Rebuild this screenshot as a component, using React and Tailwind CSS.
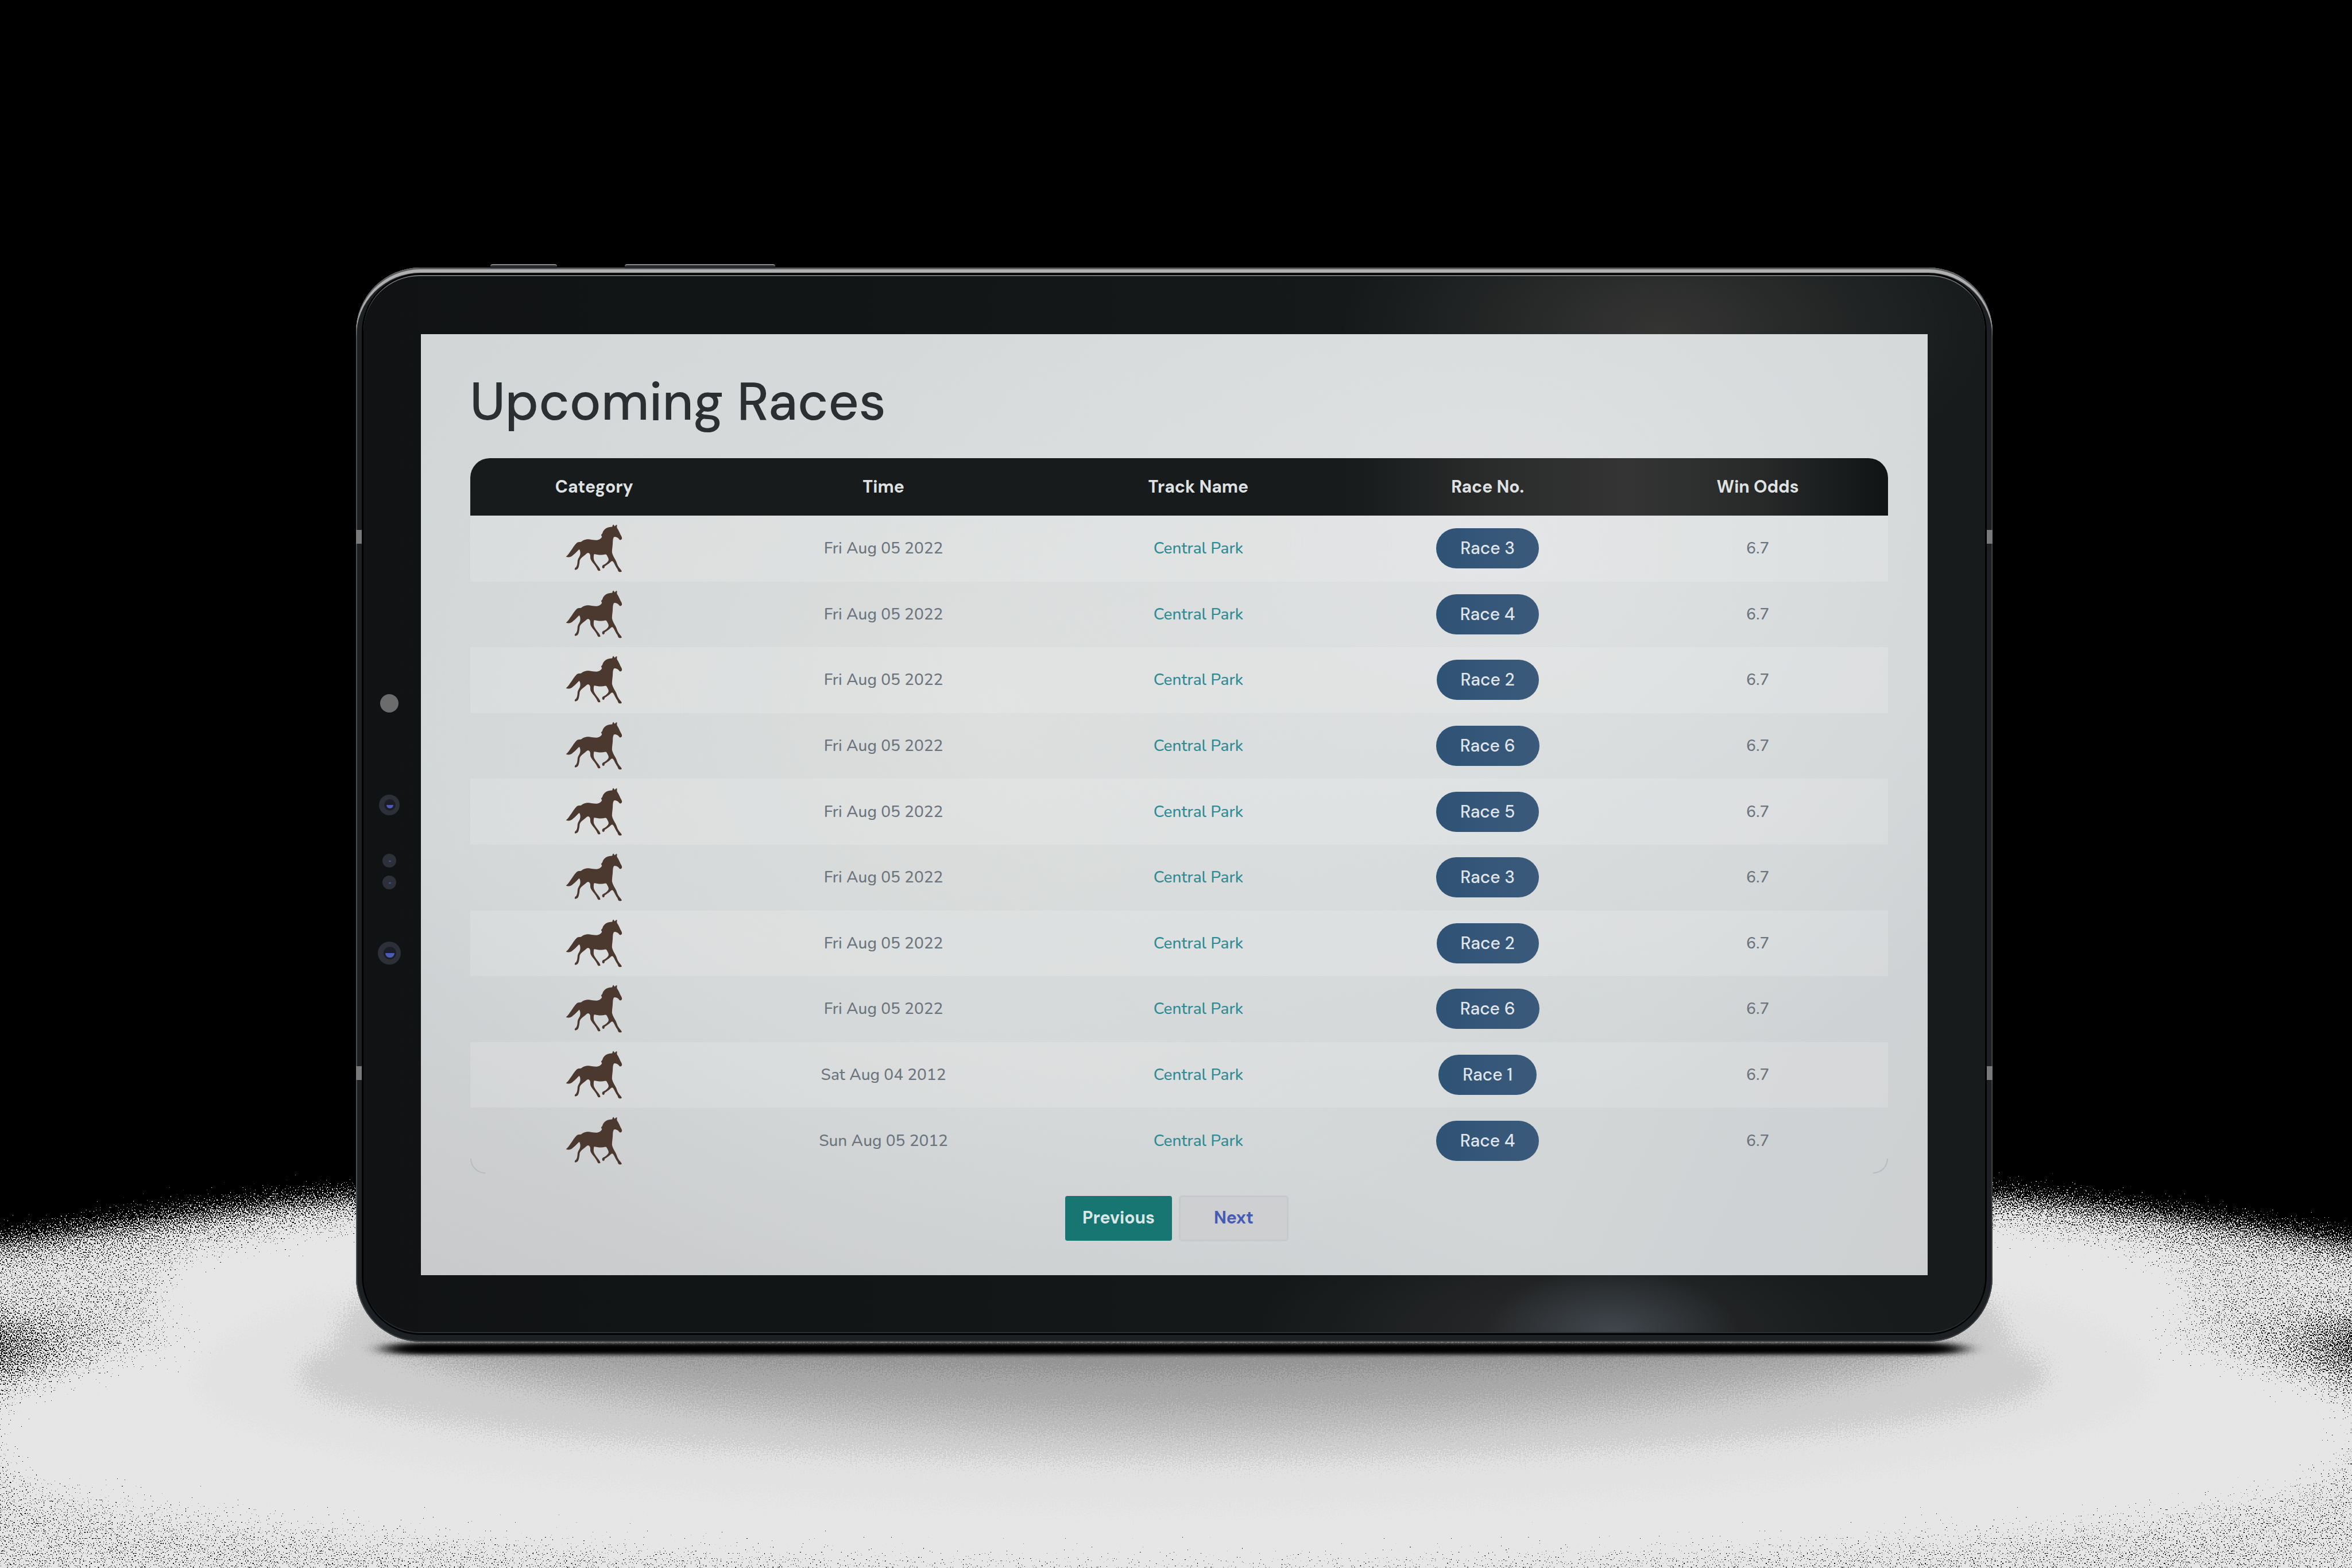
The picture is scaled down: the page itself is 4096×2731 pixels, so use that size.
const races = [
  { time: "Fri Aug 05 2022", race: "Race 3" },
  { time: "Fri Aug 05 2022", race: "Race 4" },
  { time: "Fri Aug 05 2022", race: "Race 2" },
  { time: "Fri Aug 05 2022", race: "Race 6" },
  { time: "Fri Aug 05 2022", race: "Race 5" },
  { time: "Fri Aug 05 2022", race: "Race 3" },
  { time: "Fri Aug 05 2022", race: "Race 2" },
  { time: "Fri Aug 05 2022", race: "Race 6" },
  { time: "Sat Aug 04 2012", race: "Race 1" },
  { time: "Sun Aug 05 2012", race: "Race 4" },
];

function Horse() {
  return (
    <svg viewBox="70 40 330 284" className="mx-auto h-[86px] w-[100px]" fill="#4b382f" role="img" aria-label="Horse racing">
      <path d="M72 230 C84 222 92 206 103 192 C114 176 126 156 138 148 C144 144 152 147 160 144 C172 134 188 129 204 130 C222 132 238 137 254 134 C266 131 274 126 279 116 L274 104 C282 100 282 92 286 84 C294 70 308 62 324 60 L338 58 C340 52 341 48 344 45 C349 49 351 54 353 56 C356 51 360 47 365 47 C366 54 364 60 366 66 C374 76 378 88 384 100 C389 109 395 118 394 126 C392 134 384 136 379 132 C374 122 362 116 350 116 C342 122 342 136 341 152 C340 172 336 190 337 206 C340 222 350 236 357 250 C364 262 366 276 374 288 C380 298 390 306 393 314 C388 321 378 319 373 314 C370 306 368 300 363 294 C356 284 350 268 344 260 C338 252 333 256 327 262 C316 272 304 280 295 285 C294 293 291 299 284 297 C277 290 280 280 288 277 C300 272 308 264 314 256 C320 248 316 238 311 230 C308 222 304 216 298 217 C278 222 254 220 234 215 C230 224 231 236 232 246 C236 258 246 270 254 282 C260 290 268 298 270 309 C264 314 256 312 253 304 C248 294 242 284 234 274 C226 264 216 252 213 242 C211 228 214 216 204 210 C194 204 188 216 180 222 C168 230 156 240 151 252 C150 266 148 280 144 292 C140 302 132 308 123 305 C120 298 126 292 131 289 C138 278 138 264 139 252 C142 238 152 230 154 216 C155 204 154 194 148 188 C138 196 126 212 112 222 C102 234 84 236 72 230 Z" />
    </svg>
  );
}

/* Grainy floor with the soft contact shadow under the device. */
function Floor() {
  return (
    <svg viewBox="0 0 4500 3000" preserveAspectRatio="none" className="absolute inset-0 -z-10 h-full w-full" aria-hidden="true">
      <defs>
        <filter id="grain" filterUnits="userSpaceOnUse" x="0" y="2100" width="4500" height="900" colorInterpolationFilters="sRGB">
          <feGaussianBlur in="SourceGraphic" stdDeviation="50" result="field" />
          <feTurbulence type="fractalNoise" baseFrequency="0.42" numOctaves="1" seed="7" />
          <feColorMatrix values="1 0 0 0 0  1 0 0 0 0  1 0 0 0 0  0 0 0 0 1" result="noise" />
          <feComposite in="field" in2="noise" operator="arithmetic" k2="1" k3="1" k4="-1" />
          <feComponentTransfer>
            <feFuncR type="linear" slope="30" />
            <feFuncG type="linear" slope="30" />
            <feFuncB type="linear" slope="30" />
            <feFuncA type="linear" slope="0" intercept="1" />
          </feComponentTransfer>
          <feColorMatrix values="0.9 0 0 0 0  0.9 0 0 0 0  0.9 0 0 0 0  0 0 0 0 1" />
        </filter>
        <filter id="scatter" filterUnits="userSpaceOnUse" x="300" y="2300" width="3900" height="700" colorInterpolationFilters="sRGB">
          <feTurbulence type="fractalNoise" baseFrequency="0.4" numOctaves="2" seed="3" result="noise" />
          <feGaussianBlur in="SourceGraphic" stdDeviation="8" result="shade" />
          <feDisplacementMap in="shade" in2="noise" scale="130" xChannelSelector="R" yChannelSelector="G" />
        </filter>
        <filter id="contact" filterUnits="userSpaceOnUse" x="500" y="2500" width="3500" height="160">
          <feGaussianBlur stdDeviation="26 5" />
        </filter>
      </defs>
      <rect width="4500" height="3000" fill="#000" />
      <g filter="url(#grain)">
        <rect x="-300" y="1900" width="5100" height="1500" fill="#000" />
        <path fill="#aaaaaa" d="M-300 2400 C200 2310 500 2275 700 2260 L3790 2260 C4000 2275 4300 2310 4790 2400 L4790 2545 L4270 2577 L4790 2615 L4790 3400 L-300 3400 L-300 2615 L220 2577 L-300 2545 Z" />
        <path fill="#f0f0f0" d="M2250 2350 L750 2380 C450 2400 320 2450 320 2490 C320 2530 450 2560 570 2577 C300 2620 30 2670 0 2740 C-20 2860 900 2940 2250 2960 C3590 2940 4510 2860 4490 2740 C4460 2670 4190 2620 3920 2577 C4040 2560 4170 2530 4170 2490 C4170 2450 4040 2400 3740 2380 Z" />
      </g>
      <g filter="url(#scatter)">
        <path fill="#dcdcdc" fillOpacity="0.4" d="M600 2480 C400 2560 330 2620 400 2690 C560 2800 1300 2880 2245 2886 C3190 2880 3930 2800 4090 2690 C4160 2620 4090 2560 3890 2480 Z" />
        <path fill="#cdcdcd" d="M730 2450 C660 2500 640 2550 640 2577 C560 2600 560 2640 600 2665 C760 2740 1400 2790 2245 2796 C3090 2790 3730 2740 3890 2665 C3930 2640 3930 2600 3850 2577 C3850 2550 3830 2500 3760 2450 Z" />
        <path fill="#bababa" d="M700 2560 C800 2660 1500 2740 2245 2746 C2990 2740 3690 2660 3790 2560 Z" />
        <path fill="#a8a8a8" d="M730 2560 C900 2630 1500 2690 2245 2696 C2990 2690 3590 2630 3760 2560 Z" />
        <path fill="#939393" d="M760 2560 C1000 2590 1600 2626 2245 2630 C2890 2626 3490 2590 3730 2560 Z" />
      </g>
      <rect x="745" y="2574" width="3005" height="14" fill="#000" filter="url(#contact)" />
      <rect x="760" y="2573" width="2970" height="15" fill="#000" filter="url(#contact)" />
      <rect x="780" y="2574" width="2930" height="12" fill="#000" filter="url(#contact)" />
    </svg>
  );
}

function Lens({ y, r, glow }) {
  return (
    <g>
      <circle cx="20" cy={y} r={r} fill="#2d3038" />
      {glow > 3 && <circle cx="21" cy={y} r={r * 0.55} fill="#1b1d27" />}
      <path d={`M${21 - glow} ${y} h${glow * 2} a${glow} ${glow} 0 0 1 ${-glow * 2} 0 Z`} fill="#4a5cb4" />
    </g>
  );
}

/* Side keys, antenna bands and the sensor row of the device body. */
function Hardware() {
  return (
    <>
      <span className="absolute -top-[6px] left-[234px] h-[7px] w-[116px] rounded-t-sm border-t-2 border-[#8a8a8c] bg-[#26272a]" />
      <span className="absolute -top-[6px] left-[468px] h-[7px] w-[262px] rounded-t-sm border-t-2 border-[#8a8a8c] bg-[#26272a]" />
      <span className="absolute top-[457px] left-0 h-[24px] w-[10px] bg-[#77797a]" />
      <span className="absolute top-[1391px] left-0 h-[24px] w-[10px] bg-[#77797a]" />
      <span className="absolute top-[457px] right-0 h-[24px] w-[10px] bg-[#77797a]" />
      <span className="absolute top-[1391px] right-0 h-[24px] w-[10px] bg-[#77797a]" />
      <svg viewBox="0 0 40 480" className="absolute top-[739px] left-[38px] h-[480px] w-[40px]" aria-hidden="true">
        <circle cx="20" cy="20" r="16" fill="#6c6c6d" />
        <Lens y={197} r={18} glow={6} />
        <Lens y={294} r={12} glow={2} />
        <Lens y={332} r={12} glow={2} />
        <Lens y={455} r={20} glow={8} />
      </svg>
    </>
  );
}

function RaceTable() {
  return (
    <div className="relative">
      <table className="h-[1246px] w-full table-fixed border-separate border-spacing-0 text-center">
        <thead>
          <tr className="h-[100px] font-['DM_Sans','Inter',sans-serif] text-[30px] leading-[40px] font-bold text-[#dfe1e2]">
            <th className="w-[17.5%] rounded-tl-[34px] bg-[#171b1c]">Category</th>
            <th className="w-[23.3%] bg-[#171b1c]">Time</th>
            <th className="w-[21.1%] bg-[#171b1c]">Track Name</th>
            <th className="w-[19.7%] bg-linear-to-r from-[#171b1c] via-[#2a2b2b] to-[#343434]">Race No.</th>
            <th className="w-[18.4%] rounded-tr-[34px] bg-linear-to-r from-[#343434] via-[#282a2a] to-[#111415]">Win Odds</th>
          </tr>
        </thead>
        <tbody className="font-['Nunito','Open_Sans',sans-serif] text-[28px] leading-[40px] font-medium text-[#6b757e]">
          {races.map((row, i) => (
            <tr key={i} className="odd:bg-white/15">
              <td><Horse /></td>
              <td>{row.time}</td>
              <td><a href="#track" className="text-[#2f8c94]">Central Park</a></td>
              <td>
                <button type="button" className="h-[70px] rounded-full bg-linear-to-r from-[#2f5375] to-[#3b5a7b] px-[42px] font-['DM_Sans','Inter',sans-serif] text-[30px] text-[#dfe5ea]">
                  {row.race}
                </button>
              </td>
              <td>6.7</td>
            </tr>
          ))}
        </tbody>
      </table>
      <span className="absolute bottom-0 left-0 size-[26px] rounded-bl-[26px] border-b-2 border-l-2 border-[#b9bcbe]" />
      <span className="absolute right-0 bottom-0 size-[26px] rounded-br-[26px] border-r-2 border-b-2 border-[#b9bcbe]" />
    </div>
  );
}

export default function App() {
  return (
    <div className="relative isolate flex min-h-screen items-start justify-center overflow-hidden pt-[466px] pr-[6px]">
      <Floor />
      <div className="relative w-[69.6vw] rounded-[112px] bg-[#1d2022] px-[10px] pt-[10px] pb-[12px] shadow-[inset_0_3px_0_#5a5b5d,inset_0_9px_1px_#b0b0b0,inset_2px_0_0_#45494b,inset_-2px_0_0_#3a3d3f,inset_0_-2px_0_#3a3d3f]">
        <div className="rounded-[102px] border-3 border-black bg-linear-to-r from-[#101213] via-[#141819] to-[#171b1c]">
          <div className="rounded-[98px] border-t-2 border-b-2 border-t-[#6f7576] border-b-[#2a2e30] bg-[radial-gradient(ellipse_560px_300px_at_80%_5%,#343433,transparent),radial-gradient(ellipse_220px_110px_at_77%_100%,#40474d,transparent),radial-gradient(ellipse_560px_200px_at_75%_100%,#2b2b2c,transparent)] px-[100px] pt-[101px] pb-[99px]">
            <main className="bg-[#d2d6d7] bg-[radial-gradient(ellipse_44%_60%_at_72%_22%,#dfe1e2_0%,transparent_100%),radial-gradient(ellipse_44%_65%_at_38%_40%,#dcdedd_0%,transparent_100%),linear-gradient(20deg,#c9cacc_0%,transparent_30%),linear-gradient(-65deg,#cdcfd1_0%,transparent_22%)] pt-[58px] pr-[69px] pb-[59px] pl-[86px]">
              <h1 className="pb-[38px] font-['DM_Sans','Inter',sans-serif] text-[92px] leading-[120px] font-medium text-[#2b2f31]">Upcoming Races</h1>
              <RaceTable />
              <nav className="flex items-center justify-center gap-[12px] pt-[38px] pr-[8px] font-['DM_Sans','Inter',sans-serif] text-[30px] leading-[40px] font-bold" aria-label="Pages">
                <button type="button" className="h-[78px] rounded-[4px] bg-[#177671] px-[30px] pb-[2px] text-[#dbe6e6]">Previous</button>
                <button type="button" className="h-[80px] rounded-[6px] border-3 border-[#c8c9cc] bg-[#cecfd1] px-[58px] pb-[2px] text-[#465bb5]">Next</button>
              </nav>
            </main>
          </div>
        </div>
        <Hardware />
      </div>
    </div>
  );
}
